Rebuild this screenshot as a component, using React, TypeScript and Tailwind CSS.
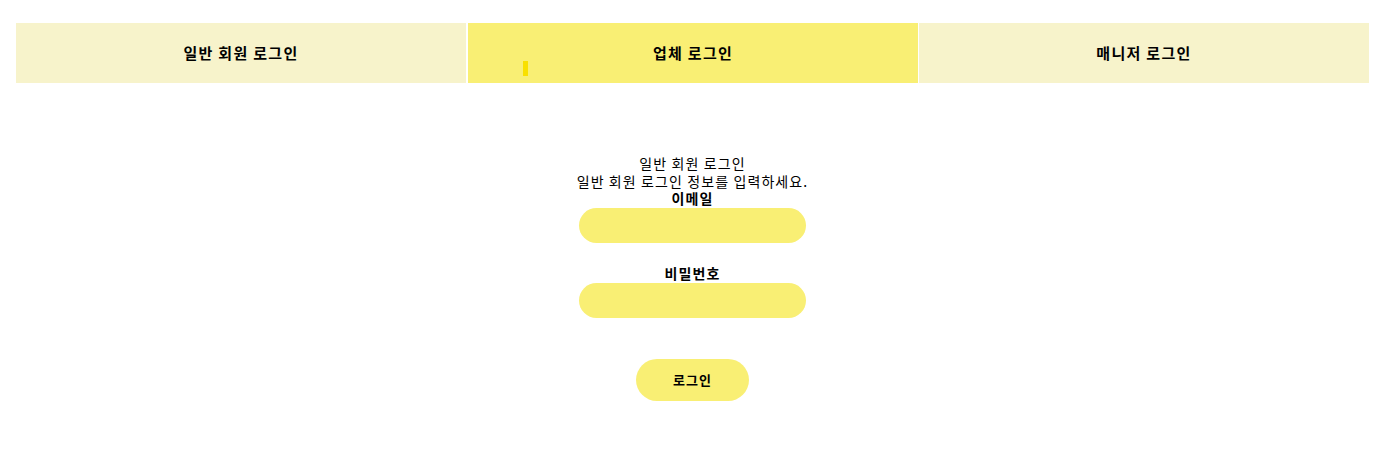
import { useState } from 'react'

const tabs = ['일반 회원 로그인', '업체 로그인', '매니저 로그인']

export default function App() {
  const [active, setActive] = useState(1)

  return (
    <div className="min-h-screen bg-white text-black" style={{ fontFamily: '"Noto Sans CJK KR", "Liberation Sans", sans-serif' }}>
      <div className="ml-4 w-[1353px]">
        {/* tab bar */}
        <div className="pt-[23px]">
          <div className="flex h-[60px]">
            {tabs.map((t, i) => (
              <button
                key={t}
                onClick={() => setActive(i)}
                className={
                  'relative w-[450px] h-full flex items-center justify-center text-[15px] font-bold tracking-[1.3px] ' +
                  (i === 1 ? 'ml-[2px] mr-px ' : '') +
                  (active === i ? 'bg-[#f9ef74]' : 'bg-[#f7f3cb]')
                }
              >
                {t}
                {i === 1 && <span className="absolute left-[55px] top-[38px] w-[5px] h-[15px] bg-[#f9e000]" />}
              </button>
            ))}
          </div>
        </div>

        {/* login form */}
        <div className="flex flex-col items-center pt-[71px] text-[14px] leading-[18px] tracking-[1.1px]">
          <p>일반 회원 로그인</p>
          <p>일반 회원 로그인 정보를 입력하세요.</p>
          <label className="font-bold leading-[16px]">이메일</label>
          <input className="mt-[2px] w-[227px] h-[35px] rounded-full bg-[#f9ef74] outline-none px-4" />
          <label className="mt-[22px] font-bold leading-[16px]">비밀번호</label>
          <input type="password" className="mt-[2px] w-[227px] h-[35px] rounded-full bg-[#f9ef74] outline-none px-4" />
          <button className="mt-[41px] w-[113px] h-[42px] rounded-full bg-[#f9ef74] text-[13px] font-bold tracking-[1px]">로그인</button>
        </div>
      </div>
    </div>
  )
}
